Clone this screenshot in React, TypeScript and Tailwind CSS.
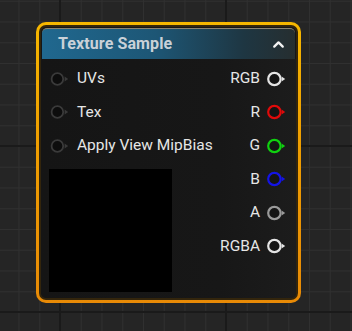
import React from "react";
import { ChevronUp } from "lucide-react";

interface PinProps {
  color: string;
  input?: boolean;
}

const Pin: React.FC<PinProps> = ({ color, input }) => (
  <svg width="20" height="16" viewBox="0 0 20 16" className="shrink-0">
    <circle
      cx="7.4"
      cy="8"
      r={input ? 5.8 : 6.2}
      fill={input ? "#0d0d0d" : "#141414"}
      stroke={color}
      strokeWidth={input ? 1.8 : 2.2}
    />
    <polygon points="14.6,5.4 18.2,8 14.6,10.6" fill={color} />
  </svg>
);

const inputs = ["UVs", "Tex", "Apply View MipBias"];

const outputs = [
  { label: "RGB", color: "#e4e4e4" },
  { label: "R", color: "#e00a0a" },
  { label: "G", color: "#10d010" },
  { label: "B", color: "#1414e6" },
  { label: "A", color: "#9a9a9a" },
  { label: "RGBA", color: "#e4e4e4" },
];

export default function App() {
  return (
    <div
      className="w-[352px] h-[331px] overflow-hidden bg-[#252525] pl-[36px] pt-[22px] font-['Roboto',sans-serif] bg-[image:linear-gradient(to_right,#1a1a1a_2px,transparent_2px),linear-gradient(to_bottom,#1a1a1a_2px,transparent_2px),linear-gradient(to_right,#303030_1px,transparent_1px),linear-gradient(to_bottom,#303030_1px,transparent_1px)] bg-[size:166px_100%,100%_166px,20.75px_100%,100%_20.75px] bg-[position:59px_0,0_311px,18.5px_0,0_0.75px]"
    >
      {/* node */}
      <div className="w-[265px] h-[281px] rounded-[10px] p-[3px] bg-[linear-gradient(to_bottom,#f6b700,#f0a000_40%,#e88a06)]">
        <div className="h-full rounded-[7px] border-[2px] border-[#33250c] bg-[#161616] flex flex-col overflow-hidden">
          {/* header */}
          <div className="h-[31px] mx-[1px] mt-[1px] rounded-t-[5px] border-t border-[#8c8571] bg-[linear-gradient(to_right,#20688f,#1d5675_45%,#1e3642_80%,#262e30)] flex items-center justify-between pl-[16px] pr-[8px]">
            <span className="text-[16px] font-bold text-[#c9d1d8] tracking-[0.1px]">
              Texture Sample
            </span>
            <ChevronUp size={17} strokeWidth={3.2} color="#f2f2f2" />
          </div>

          {/* body */}
          <div className="flex-1 flex justify-between pt-[3px] bg-[linear-gradient(to_right,#151515,#171717_70%,#1c1c1c)]">
            <div className="flex flex-col pl-[8px]">
              {inputs.map((name) => (
                <div key={name} className="h-[33.5px] flex items-center gap-[7px] pl-[1px]">
                  <Pin color="#3a3a3a" input />
                  <span className="text-[15.5px] text-[#e6e6e6]">{name}</span>
                </div>
              ))}
              <div className="mt-[6px] w-[123px] h-[123px] bg-black" />
            </div>

            <div className="flex flex-col items-end pr-[9px]">
              {outputs.map((o) => (
                <div key={o.label} className="h-[33.5px] flex items-center gap-[7px]">
                  <span className="text-[15.5px] text-[#e6e6e6]">{o.label}</span>
                  <Pin color={o.color} />
                </div>
              ))}
            </div>
          </div>
        </div>
      </div>
    </div>
  );
}
